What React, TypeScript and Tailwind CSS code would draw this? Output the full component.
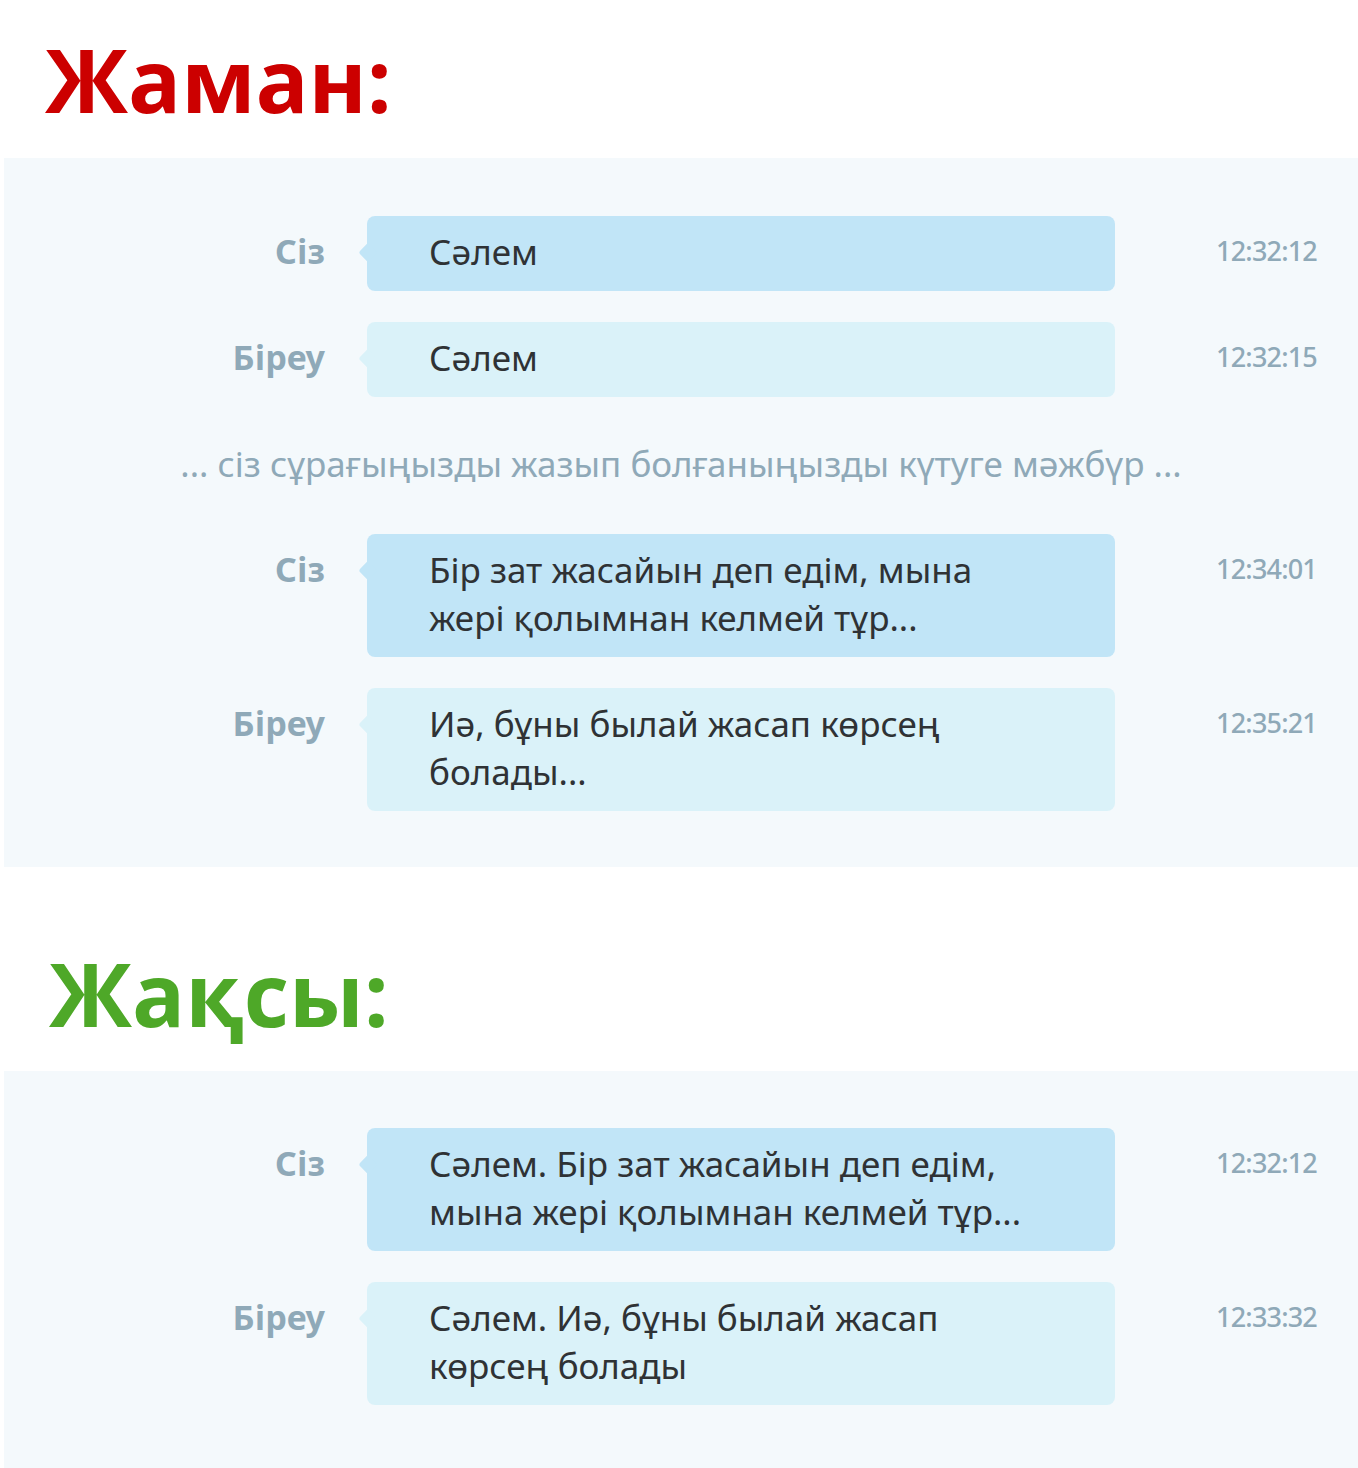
import React from "react";

type Msg = {
  who: "you" | "other";
  lines: string[];
  time: string;
};

const bad: (Msg | string)[] = [
  { who: "you", lines: ["Сәлем"], time: "12:32:12" },
  { who: "other", lines: ["Сәлем"], time: "12:32:15" },
  "... сіз сұрағыңызды жазып болғаныңызды күтуге мәжбүр ...",
  {
    who: "you",
    lines: ["Бір зат жасайын деп едім, мына", "жері қолымнан келмей тұр..."],
    time: "12:34:01"
  },
  {
    who: "other",
    lines: ["Иә, бұны былай жасап көрсең", "болады..."],
    time: "12:35:21"
  }
];

const good: Msg[] = [
  {
    who: "you",
    lines: ["Сәлем. Бір зат жасайын деп едім,", "мына жері қолымнан келмей тұр..."],
    time: "12:32:12"
  },
  {
    who: "other",
    lines: ["Сәлем. Иә, бұны былай жасап", "көрсең болады"],
    time: "12:33:32"
  }
];

const ChatRow: React.FC<{ msg: Msg }> = ({ msg }) => {
  const mine = msg.who === "you";
  return (
    <div className="grid grid-cols-[363px_748px_1fr] items-start">
      <div className="pr-[42px] pt-[11px] text-right text-[34px] font-bold leading-[48px] text-[#8fa9b8]">
        {mine ? "Сіз" : "Біреу"}
      </div>
      <div
        className={`relative rounded-lg pb-[15.5px] pl-[62px] pr-6 pt-[11.5px] text-[35px] leading-[48px] text-[#2f3235] ${
          mine ? "bg-[#c1e5f7]" : "bg-[#daf2f9]"
        }`}
      >
        <span
          className={`absolute left-[-6px] top-[30px] h-[13px] w-[13px] rotate-45 rounded-bl-[3px] ${
            mine ? "bg-[#c1e5f7]" : "bg-[#daf2f9]"
          }`}
        />
        {msg.lines.map((line, i) => (
          <div key={i} className="relative whitespace-nowrap">
            {line}
          </div>
        ))}
      </div>
      <div className="pr-[41px] pt-[11px] text-right text-[27px] font-medium leading-[48px] tracking-[-0.8px] text-[#8fa9b8]">
        {msg.time}
      </div>
    </div>
  );
};

export default function App() {
  return (
    <div
      className="min-h-[1468px] w-[1358px] bg-white"
      style={{ fontFamily: '"Noto Sans", "Open Sans", sans-serif' }}
    >
      <h1
        className="ml-[45px] h-[158px] pt-[35px] text-[88px] font-bold leading-none text-[#cc0000]"
        style={{ fontFamily: '"Open Sans", sans-serif' }}
      >
        Жаман:
      </h1>
      <section className="ml-[4px] flex flex-col gap-[31px] bg-[#f4f9fc] pb-[56px] pt-[58px]">
        {bad.map((item, i) =>
          typeof item === "string" ? (
            <div
              key={i}
              className="whitespace-nowrap pb-[15.5px] pt-[11.5px] text-center text-[35px] leading-[48px] text-[#8fa9b8]"
            >
              {item}
            </div>
          ) : (
            <ChatRow key={i} msg={item} />
          )
        )}
      </section>
      <h1
        className="ml-[49px] h-[204px] pt-[82px] text-[88px] font-bold leading-none text-[#4ea828]"
        style={{ fontFamily: '"Open Sans", sans-serif' }}
      >
        Жақсы:
      </h1>
      <section className="ml-[4px] flex flex-col gap-[31px] bg-[#f4f9fc] pb-[63px] pt-[57px]">
        {good.map((msg, i) => (
          <ChatRow key={i} msg={msg} />
        ))}
      </section>
    </div>
  );
}
